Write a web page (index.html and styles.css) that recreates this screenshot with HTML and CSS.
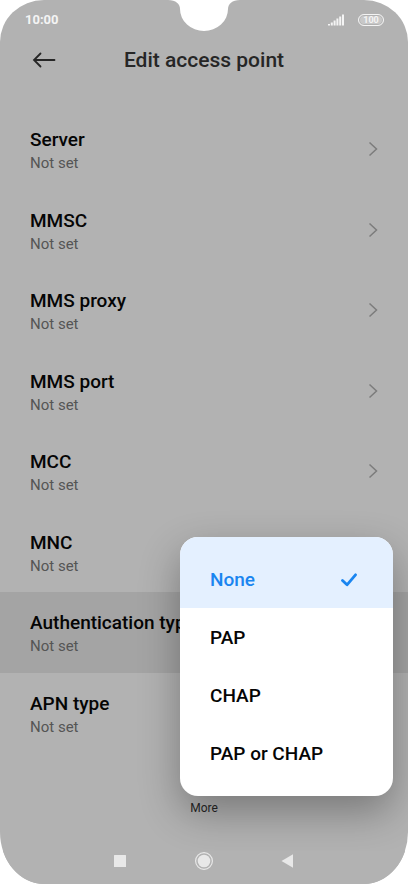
FILE: index.html
```html
<!DOCTYPE html>
<html lang="en">

<head>
  <meta charset="UTF-8">
  <meta name="viewport" content="width=device-width, initial-scale=1.0">
  <title>Edit access point</title>
  <link rel="stylesheet" href="styles.css">
</head>

<body>
  <div class="phone">
    <svg class="notch" width="72" height="32" viewBox="0 0 72 32" aria-hidden="true">
      <path d="M0 0C8 0 12 4 12 9A24 22 0 0 0 60 9C60 4 64 0 72 0Z" fill="#fff" />
    </svg>

    <div class="status-bar">
      <span class="time">10:00</span>
      <svg class="signal" width="16" height="12" viewBox="0 0 16 12" aria-hidden="true">
        <path d="M1 10v1.500M3.800 8.500v3M6.600 6.500v5M9.400 4.500v7M12.200 2.500v9M15 .5v11" />
      </svg>
      <span class="battery">100</span>
    </div>

    <header class="header">
      <button class="back" type="button" aria-label="Back">
        <svg width="24" height="18" viewBox="0 0 24 18">
          <path d="M22.500 9H2M8.500 2.500L2 9l6.500 6.500" />
        </svg>
      </button>
      <h1 class="title">Edit access point</h1>
    </header>

    <main class="list">
      <button class="row" type="button">
        <span class="text"><span class="name">Server</span><span class="value">Not set</span></span>
        <svg class="chevron" width="10" height="16" viewBox="0 0 10 16"><path d="M1.500 1.500L8.500 8l-7 6.500" /></svg>
      </button>
      <button class="row" type="button">
        <span class="text"><span class="name">MMSC</span><span class="value">Not set</span></span>
        <svg class="chevron" width="10" height="16" viewBox="0 0 10 16"><path d="M1.500 1.500L8.500 8l-7 6.500" /></svg>
      </button>
      <button class="row" type="button">
        <span class="text"><span class="name">MMS proxy</span><span class="value">Not set</span></span>
        <svg class="chevron" width="10" height="16" viewBox="0 0 10 16"><path d="M1.500 1.500L8.500 8l-7 6.500" /></svg>
      </button>
      <button class="row" type="button">
        <span class="text"><span class="name">MMS port</span><span class="value">Not set</span></span>
        <svg class="chevron" width="10" height="16" viewBox="0 0 10 16"><path d="M1.500 1.500L8.500 8l-7 6.500" /></svg>
      </button>
      <button class="row" type="button">
        <span class="text"><span class="name">MCC</span><span class="value">Not set</span></span>
        <svg class="chevron" width="10" height="16" viewBox="0 0 10 16"><path d="M1.500 1.500L8.500 8l-7 6.500" /></svg>
      </button>
      <button class="row" type="button">
        <span class="text"><span class="name">MNC</span><span class="value">Not set</span></span>
      </button>
      <button class="row active" type="button" aria-haspopup="listbox" aria-expanded="true">
        <span class="text"><span class="name">Authentication type</span><span class="value">Not set</span></span>
      </button>
      <button class="row" type="button">
        <span class="text"><span class="name">APN type</span><span class="value">Not set</span></span>
      </button>
    </main>

    <div class="toolbar">
      <button class="more" type="button">More</button>
    </div>

    <!-- authentication type popup -->
    <div class="menu" role="listbox" aria-label="Authentication type">
      <button class="option selected" type="button" role="option" aria-selected="true">
        None
        <svg class="check" width="16" height="14" viewBox="0 0 16 14"><path d="M1.500 7.500l4.500 4.300L14.500 1.800" /></svg>
      </button>
      <button class="option" type="button" role="option" aria-selected="false">PAP</button>
      <button class="option" type="button" role="option" aria-selected="false">CHAP</button>
      <button class="option" type="button" role="option" aria-selected="false">PAP or CHAP</button>
    </div>

    <nav class="nav-bar">
      <button class="nav-button" type="button" aria-label="Recent apps">
        <svg width="20" height="20" viewBox="0 0 20 20"><rect x="4" y="4" width="12" height="12" rx=".5" /></svg>
      </button>
      <button class="nav-button" type="button" aria-label="Home">
        <svg width="20" height="20" viewBox="0 0 20 20">
          <circle cx="10" cy="10" r="6.300" />
          <circle class="ring" cx="10" cy="10" r="8.400" />
        </svg>
      </button>
      <button class="nav-button" type="button" aria-label="Back">
        <svg width="20" height="20" viewBox="0 0 20 20"><path d="M15 3.300v13.400L3.500 10z" /></svg>
      </button>
    </nav>
  </div>
</body>

</html>
```
FILE: styles.css
```css
* {
  box-sizing: border-box;
}

body {
  margin: 0;
  background: #fff;
  font-family: Roboto, "Liberation Sans", sans-serif;
}

button {
  margin: 0;
  padding: 0;
  border: 0;
  background: none;
  color: inherit;
  font: inherit;
  text-align: left;
  cursor: pointer;
}

svg {
  display: block;
  flex: none;
}

.phone {
  position: relative;
  display: flex;
  flex-direction: column;
  min-height: 100vh;
  overflow: hidden;
  border-radius: 44px 44px 44px 44px / 42px 42px 52px 52px;
  background: #b2b2b2;
}

.notch {
  position: absolute;
  top: 0;
  left: 50%;
  transform: translateX(-50%);
}

/* status bar */
.status-bar {
  display: flex;
  align-items: center;
  height: 39px;
  padding: 0 24px 0 25px;
  color: #f4f4f4;
}

.time {
  flex: 1;
  font-size: 13px;
  font-weight: 700;
}

.signal {
  margin-right: 14px;
  fill: none;
  stroke: #f4f4f4;
  stroke-width: 2;
}

.battery {
  width: 26px;
  height: 12px;
  border: 1px solid #f4f4f4;
  border-radius: 6px;
  background: #c8c8c8;
  box-shadow: inset 0 0 0 1px #b2b2b2;
  font-size: 9px;
  font-weight: 700;
  line-height: 10px;
  text-align: center;
}

/* header */
.header {
  display: grid;
  grid-template-columns: 24px 1fr 24px;
  align-items: center;
  height: 42px;
  margin-bottom: 28px;
  padding: 0 32px;
}

.back svg {
  fill: none;
  stroke: #262626;
  stroke-width: 1.8;
  stroke-linecap: round;
}

.title {
  margin: 0;
  color: #262626;
  font-size: 21px;
  font-weight: 500;
  line-height: 28px;
  text-align: center;
}

/* settings list */
.list {
  flex: 1;
  display: grid;
  grid-auto-rows: 1fr;
}

.row {
  display: flex;
  align-items: center;
  justify-content: space-between;
  padding: 0 30px;
}

.row.active {
  background: #a4a4a4;
}

.text {
  padding-top: 4px;
}

.name,
.value {
  display: block;
}

.name {
  color: #050505;
  font-size: 19px;
  font-weight: 500;
  line-height: 24px;
}

.value {
  color: #555;
  font-size: 15px;
  line-height: 22px;
}

.chevron {
  fill: none;
  stroke: #7c7c7c;
  stroke-width: 1.5;
}

.toolbar {
  display: flex;
  align-items: flex-end;
  justify-content: center;
  height: 98px;
  padding-bottom: 35px;
}

.more {
  color: #262626;
  font-size: 12px;
  line-height: 16px;
}

/* popup */
.menu {
  position: absolute;
  right: 15px;
  bottom: 88px;
  width: 213px;
  padding-bottom: 14px;
  overflow: hidden;
  border-radius: 18px;
  background: #fff;
  box-shadow: 0 16px 40px rgba(0, 0, 0, .32);
}

.option {
  display: flex;
  align-items: center;
  justify-content: space-between;
  width: 100%;
  height: 58px;
  padding: 0 36px 0 30px;
  color: #050505;
  font-size: 19px;
  font-weight: 500;
}

.option.selected {
  height: 71px;
  padding-top: 14px;
  background: #e4f0ff;
  color: #1a85f0;
}

.check {
  fill: none;
  stroke: #1a85f0;
  stroke-width: 2.8;
  stroke-linecap: round;
  stroke-linejoin: round;
}

/* system navigation */
.nav-bar {
  position: relative;
  display: flex;
  align-items: flex-start;
  justify-content: center;
  gap: 64px;
  height: 33px;
  background: #b2b2b2;
}

.nav-button svg {
  fill: #e8e8e8;
}

.nav-button .ring {
  fill: none;
  stroke: #e8e8e8;
  stroke-width: 1.2;
}
```
